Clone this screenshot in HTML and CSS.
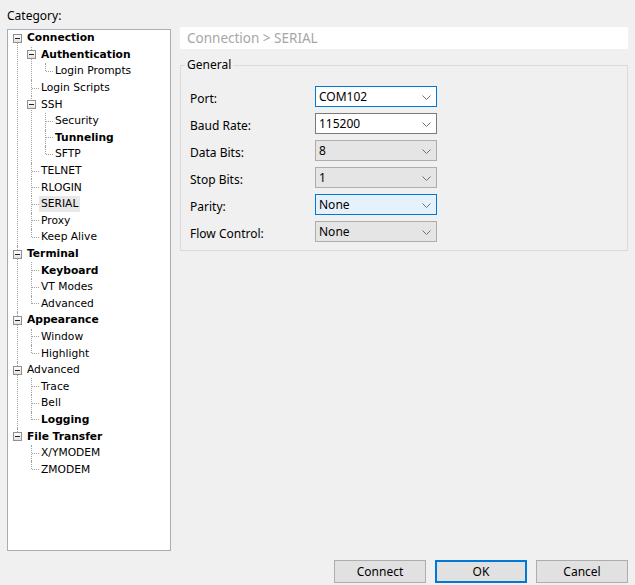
FILE: index.html
```html
<!DOCTYPE html>
<html>
<head>
<meta charset="utf-8">
<link rel="stylesheet" href="styles.css">
</head>
<body>
<div class="dialog">
  <div class="main">
    <div class="left">
      <div class="cat-label">Category:</div>
      <div class="tree-box">
        <ul class="tree">
          <li class="root first"><div class="row"><span class="slot"><span class="exp"></span></span><span class="lbl b">Connection</span></div>
            <ul>
              <li><div class="row"><span class="slot"><span class="exp"></span></span><span class="lbl b">Authentication</span></div>
                <ul>
                  <li class="last"><div class="row"><span class="slot"><span class="stub"></span></span><span class="lbl">Login Prompts</span></div></li>
                </ul>
              </li>
              <li><div class="row"><span class="slot"><span class="stub"></span></span><span class="lbl">Login Scripts</span></div></li>
              <li><div class="row"><span class="slot"><span class="exp"></span></span><span class="lbl">SSH</span></div>
                <ul>
                  <li><div class="row"><span class="slot"><span class="stub"></span></span><span class="lbl">Security</span></div></li>
                  <li><div class="row"><span class="slot"><span class="stub"></span></span><span class="lbl b">Tunneling</span></div></li>
                  <li class="last"><div class="row"><span class="slot"><span class="stub"></span></span><span class="lbl">SFTP</span></div></li>
                </ul>
              </li>
              <li><div class="row"><span class="slot"><span class="stub"></span></span><span class="lbl">TELNET</span></div></li>
              <li><div class="row"><span class="slot"><span class="stub"></span></span><span class="lbl">RLOGIN</span></div></li>
              <li><div class="row"><span class="slot"><span class="stub"></span></span><span class="lbl sel">SERIAL</span></div></li>
              <li><div class="row"><span class="slot"><span class="stub"></span></span><span class="lbl">Proxy</span></div></li>
              <li class="last"><div class="row"><span class="slot"><span class="stub"></span></span><span class="lbl">Keep Alive</span></div></li>
            </ul>
          </li>
          <li class="root"><div class="row"><span class="slot"><span class="exp"></span></span><span class="lbl b">Terminal</span></div>
            <ul>
              <li><div class="row"><span class="slot"><span class="stub"></span></span><span class="lbl b">Keyboard</span></div></li>
              <li><div class="row"><span class="slot"><span class="stub"></span></span><span class="lbl">VT Modes</span></div></li>
              <li class="last"><div class="row"><span class="slot"><span class="stub"></span></span><span class="lbl">Advanced</span></div></li>
            </ul>
          </li>
          <li class="root"><div class="row"><span class="slot"><span class="exp"></span></span><span class="lbl b">Appearance</span></div>
            <ul>
              <li><div class="row"><span class="slot"><span class="stub"></span></span><span class="lbl">Window</span></div></li>
              <li class="last"><div class="row"><span class="slot"><span class="stub"></span></span><span class="lbl">Highlight</span></div></li>
            </ul>
          </li>
          <li class="root"><div class="row"><span class="slot"><span class="exp"></span></span><span class="lbl">Advanced</span></div>
            <ul>
              <li><div class="row"><span class="slot"><span class="stub"></span></span><span class="lbl">Trace</span></div></li>
              <li><div class="row"><span class="slot"><span class="stub"></span></span><span class="lbl">Bell</span></div></li>
              <li class="last"><div class="row"><span class="slot"><span class="stub"></span></span><span class="lbl b">Logging</span></div></li>
            </ul>
          </li>
          <li class="root last"><div class="row"><span class="slot"><span class="exp"></span></span><span class="lbl b">File Transfer</span></div>
            <ul>
              <li><div class="row"><span class="slot"><span class="stub"></span></span><span class="lbl">X/YMODEM</span></div></li>
              <li class="last"><div class="row"><span class="slot"><span class="stub"></span></span><span class="lbl">ZMODEM</span></div></li>
            </ul>
          </li>
        </ul>
      </div>
    </div>
    <div class="right">
      <div class="crumb">Connection &gt; SERIAL</div>
      <fieldset class="group">
        <legend>General</legend>
        <div class="form">
          <span class="flabel">Port:</span>
          <div class="combo focus"><span>COM102</span><svg class="chev" width="9" height="5" viewBox="0 0 9 5"><polyline points="0.5,0.5 4.5,4.5 8.5,0.5" fill="none" stroke="#707070" stroke-width="1"/></svg></div>
          <span class="flabel">Baud Rate:</span>
          <div class="combo edit"><span>115200</span><svg class="chev" width="9" height="5" viewBox="0 0 9 5"><polyline points="0.5,0.5 4.5,4.5 8.5,0.5" fill="none" stroke="#707070" stroke-width="1"/></svg></div>
          <span class="flabel">Data Bits:</span>
          <div class="combo list"><span>8</span><svg class="chev" width="9" height="5" viewBox="0 0 9 5"><polyline points="0.5,0.5 4.5,4.5 8.5,0.5" fill="none" stroke="#707070" stroke-width="1"/></svg></div>
          <span class="flabel">Stop Bits:</span>
          <div class="combo list"><span>1</span><svg class="chev" width="9" height="5" viewBox="0 0 9 5"><polyline points="0.5,0.5 4.5,4.5 8.5,0.5" fill="none" stroke="#707070" stroke-width="1"/></svg></div>
          <span class="flabel">Parity:</span>
          <div class="combo hover"><span>None</span><svg class="chev" width="9" height="5" viewBox="0 0 9 5"><polyline points="0.5,0.5 4.5,4.5 8.5,0.5" fill="none" stroke="#707070" stroke-width="1"/></svg></div>
          <span class="flabel">Flow Control:</span>
          <div class="combo list"><span>None</span><svg class="chev" width="9" height="5" viewBox="0 0 9 5"><polyline points="0.5,0.5 4.5,4.5 8.5,0.5" fill="none" stroke="#707070" stroke-width="1"/></svg></div>
        </div>
      </fieldset>
    </div>
  </div>
  <div class="buttons">
    <button class="btn">Connect</button>
    <button class="btn default">OK</button>
    <button class="btn">Cancel</button>
  </div>
</div>
</body>
</html>
```
FILE: styles.css
```css
html, body {
  margin: 0;
  padding: 0;
  background: #f0f0f0;
}
body {
  font-family: "Noto Sans", "Liberation Sans", sans-serif;
  font-size: 12px;
  color: #000;
  width: 635px;
  height: 585px;
  overflow: hidden;
}
.dialog {
  padding: 8px 7px 0 7px;
}
.main {
  display: flex;
  align-items: flex-start;
  gap: 9px;
}
.left {
  width: 164px;
  display: flex;
  flex-direction: column;
}
.cat-label {
  line-height: 15px;
  height: 15px;
  margin-bottom: 6px;
}
.tree-box {
  box-sizing: border-box;
  height: 522px;
  background: #fff;
  border: 1px solid #abadb3;
  overflow: hidden;
}
.tree, .tree ul {
  list-style: none;
  margin: 0;
  padding: 0;
}
.tree ul {
  padding-left: 14px;
}
.tree li {
  position: relative;
}
.tree li::before {
  content: "";
  position: absolute;
  left: 9px;
  top: 0;
  bottom: 0;
  border-left: 1px dotted #a0a0a0;
}
.tree li.first::before {
  top: 8px;
}
.tree li.last::before {
  bottom: auto;
  height: 8px;
}
.row {
  display: flex;
  align-items: center;
  height: 16.6px;
  font-family: "DejaVu Sans", sans-serif;
  font-size: 10.7px;
}
.slot {
  width: 17px;
  flex: none;
  display: flex;
  align-items: center;
  height: 100%;
}
.exp {
  position: relative;
  box-sizing: border-box;
  width: 9px;
  height: 9px;
  margin-left: 5px;
  border: 1px solid #919191;
  background: linear-gradient(#ffffff, #e2e2e2);
  display: flex;
  align-items: center;
  justify-content: center;
}
.exp::after {
  content: "";
  width: 5px;
  height: 1px;
  background: #222;
}
.stub {
  margin-left: 10px;
  width: 7px;
  height: 0;
  border-top: 1px dotted #a0a0a0;
}
.lbl {
  padding: 0 2px;
  line-height: 16px;
  white-space: nowrap;
}
.lbl.b {
  font-weight: bold;
}
.lbl.sel {
  background: #e8e8e8;
}
.right {
  width: 448px;
  padding-top: 19px;
}
.crumb {
  height: 22px;
  line-height: 22px;
  background: #ffffff;
  color: #a6a6a6;
  font-size: 13.5px;
  padding-left: 7px;
}
.group {
  margin: 8px 0 0 0;
  padding: 13px 9px 8px 9px;
  border: 1px solid #dadada;
  min-width: 0;
}
.group legend {
  padding: 0 2px;
  margin-left: -5px;
  line-height: 16px;
  font-size: 12px;
}
.form {
  display: grid;
  grid-template-columns: 125px 122px;
  grid-auto-rows: 21px;
  row-gap: 6px;
  align-items: center;
}
.flabel {
  padding-top: 3px;
}
.combo {
  box-sizing: border-box;
  height: 21px;
  display: flex;
  align-items: center;
  justify-content: space-between;
  padding: 0 5px 0 3px;
  border: 1px solid #7a7a7a;
  background: #fff;
}
.combo.focus {
  border-color: #0078d7;
}
.combo.list {
  background: #e5e5e5;
  border-color: #adadad;
}
.combo.hover {
  background: #e5f1fb;
  border-color: #0078d7;
}
.chev {
  margin-top: 1px;
}
.buttons {
  display: flex;
  justify-content: flex-end;
  gap: 9px;
  margin-top: 9px;
}
.btn {
  box-sizing: border-box;
  width: 92px;
  height: 23px;
  font-family: "Noto Sans", "Liberation Sans", sans-serif;
  font-size: 12px;
  color: #000;
  background: #e1e1e1;
  border: 1px solid #adadad;
  padding: 0;
  margin: 0;
}
.btn.default {
  border: 2px solid #0078d7;
}
```
